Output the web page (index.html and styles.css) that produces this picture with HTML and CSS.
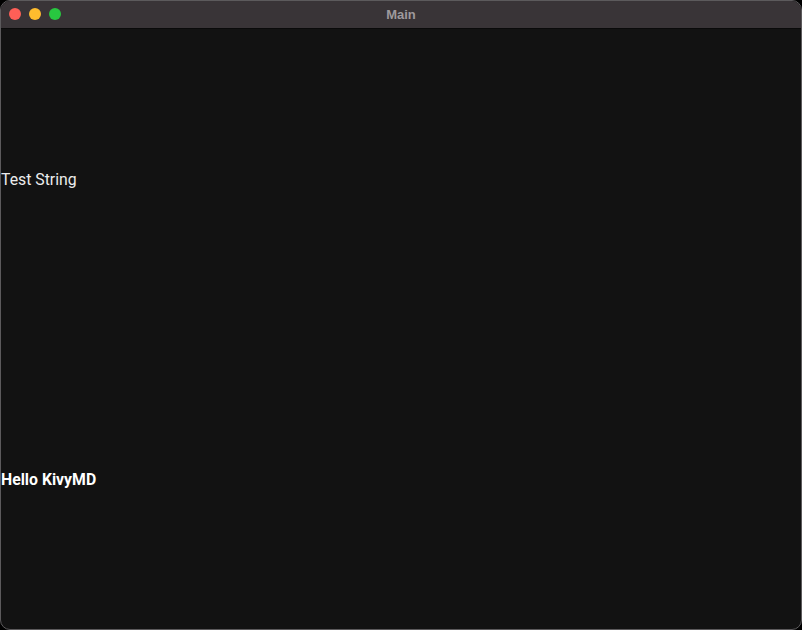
FILE: index.html
```html
<!DOCTYPE html>
<html lang="en">

<head>
    <meta charset="UTF-8">
    <meta name="viewport" content="width=device-width, initial-scale=1.0">
    <title>Main</title>

    <link rel="stylesheet" href="styles.css">
</head>

<body>
    <div class="window">
        <div class="titlebar">
            <div class="lights">
                <span class="light close"></span>
                <span class="light minimize"></span>
                <span class="light zoom"></span>
            </div>
            <span class="title">Main</span>
        </div>
        <div class="content">
            <div class="row">
                <span class="label">Test String</span>
            </div>
            <div class="row">
                <span class="label bold">Hello KivyMD</span>
            </div>
        </div>
    </div>
</body>

</html>
```

FILE: styles.css
```css
* {
    margin: 0;
    padding: 0;
    box-sizing: border-box;
}

html,
body {
    width: 802px;
    height: 630px;
    background: #000;
    overflow: hidden;
}

.window {
    width: 802px;
    height: 630px;
    border: 1px solid #5c5a5c;
    border-radius: 10px;
    overflow: hidden;
    display: flex;
    flex-direction: column;
    background: #121212;
}

.titlebar {
    height: 28px;
    background: #393437;
    border-bottom: 1px solid #0a0a0a;
    position: relative;
    display: flex;
    align-items: center;
    justify-content: center;
    flex-shrink: 0;
}

.lights {
    position: absolute;
    left: 8px;
    top: 7px;
    display: flex;
    gap: 8px;
}

.light {
    width: 12px;
    height: 12px;
    border-radius: 50%;
    display: block;
}

.light.close {
    background: #fe5f57;
}

.light.minimize {
    background: #febc2e;
}

.light.zoom {
    background: #28c840;
}

.title {
    font-family: 'Liberation Sans', Arial, sans-serif;
    font-weight: bold;
    font-size: 13px;
    color: #9e9a9d;
}

.content {
    flex: 1;
    display: flex;
    flex-direction: column;
}

.row {
    flex: 1;
    display: flex;
    align-items: center;
}

.label {
    font-family: Roboto, sans-serif;
    font-size: 15.8px;
    color: #ececec;
}

.label.bold {
    font-weight: bold;
    color: #fff;
}
```
